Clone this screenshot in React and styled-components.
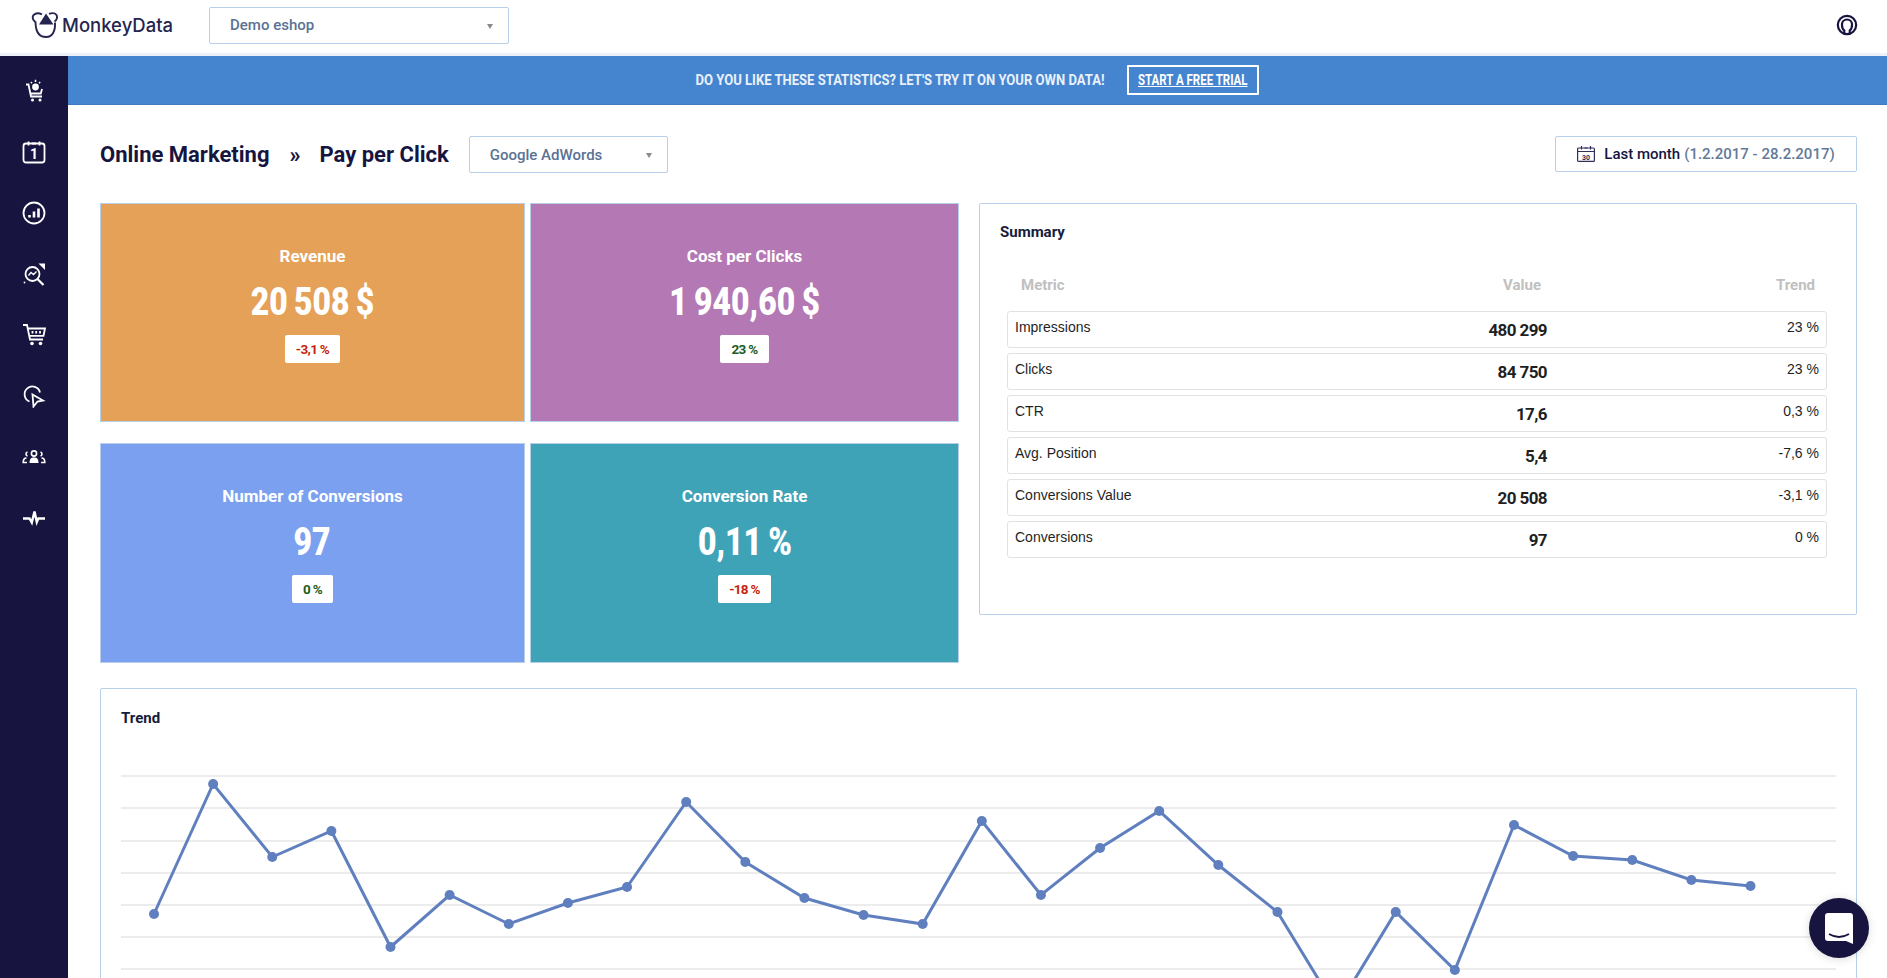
import React from 'react';
import styled, { createGlobalStyle } from 'styled-components';

const ROBOTO = '"Roboto", "Liberation Sans", sans-serif';
const NAVY = '#17153f';
const LINE = '#b7cfe9';

const cards = [
  { title: 'Revenue', value: '20 508 $', change: '-3,1 %', bg: '#e5a157', bad: true },
  { title: 'Cost per Clicks', value: '1 940,60 $', change: '23 %', bg: '#b478b4' },
  { title: 'Number of Conversions', value: '97', change: '0 %', bg: '#7ba0ef' },
  { title: 'Conversion Rate', value: '0,11 %', change: '-18 %', bg: '#3fa3b8', bad: true }
];

const rows = [
  ['Impressions', '480 299', '23 %'],
  ['Clicks', '84 750', '23 %'],
  ['CTR', '17,6', '0,3 %'],
  ['Avg. Position', '5,4', '-7,6 %'],
  ['Conversions Value', '20 508', '-3,1 %'],
  ['Conversions', '97', '0 %']
];

// y positions of the chart line, svg starts at x 121 / y 750 on the page
const trend = [
  913, 783, 856, 830, 946, 894, 923, 902, 886, 801, 861, 897, 914, 923,
  820, 894, 847, 810, 864, 911, 1008, 911, 969, 824, 855, 859, 879, 885
];
const points = trend.map((y, i) => [33 + i * 59.13, y - 750]);
const gridLines = [25, 57, 90, 122, 154, 186, 218, 250, 282];

const App = () => (
  <Page>
    <GlobalStyle />
    <Header>
      <Logo>
        <svg width="28" height="26" viewBox="0 0 28 26" fill="none" stroke="#25254f" strokeWidth="1.900">
          <path d="M4.500 10C1.800 8.500 1 5 2.500 3.200C4.500 1 8 1 11 2.300" />
          <path d="M4.500 9.500C4.500 18 7 25 15 25C21.500 25 24.500 19 24 10.500" />
          <path d="M18 1.800C21 .8 24 1 25.300 2.800C26.800 5 25.800 8 23.500 9.500" />
          <path d="M15 1.500L22.500 12.500H8Z" fill="#25254f" stroke="none" />
        </svg>
        <LogoText>MonkeyData</LogoText>
      </Logo>
      <Select $width="300px">Demo eshop</Select>
      <HelpIcon viewBox="0 0 24 24" fill="none" stroke={NAVY} strokeWidth="2.400">
        <circle cx="12" cy="12" r="10" />
        <path d="M9 21V18C7 16.500 6.500 13.500 6.500 11.500A5.500 5.500 0 0 1 17.500 11.500C17.500 13.500 17 16.500 15 18V21" />
      </HelpIcon>
    </Header>

    <Body>
      <Sidebar>
        <NavItem>
          <NavIcon viewBox="0 0 24 24">
            <path d="M4 5.500H6.500L9 17.500H20M8 14.500H18.800L20 10" />
            <circle cx="13.500" cy="8" r="2.500" fill="#fff" />
            <path d="M13.500 .8V3M8.800 3L10 4.200M18.200 3L17 4.200" strokeWidth="1.500" />
            <circle cx="10.500" cy="21" r="1.500" fill="#fff" stroke="none" />
            <circle cx="18" cy="21" r="1.500" fill="#fff" stroke="none" />
          </NavIcon>
        </NavItem>
        <NavItem>
          <NavIcon viewBox="0 0 24 24">
            <rect x="1.500" y="3.500" width="21" height="19" rx="2.500" />
            <path d="M6.500 1.500V5.500M17.500 1.500V5.500M10 3.500H14" />
            <IconText x="12" y="19" fontSize="14">1</IconText>
          </NavIcon>
        </NavItem>
        <NavItem>
          <NavIcon viewBox="0 0 24 24">
            <circle cx="12" cy="12" r="10.500" />
            <path d="M7.500 16.500V14M12 16.500V10.500M16.500 16.500V7.500" strokeWidth="2.600" />
          </NavIcon>
        </NavItem>
        <NavItem>
          <NavIcon viewBox="0 0 24 24">
            <circle cx="10.500" cy="12" r="7" />
            <path d="M15.500 17L21.500 23" strokeWidth="2.200" />
            <path d="M6.500 13.500L9 10.500L11.500 12.500L14.500 9.500" strokeWidth="1.400" />
            <path d="M16.500 1.500H23V8Z" fill="#fff" stroke="none" />
            <circle cx="2.500" cy="20.500" r=".9" fill="#fff" stroke="none" />
          </NavIcon>
        </NavItem>
        <NavItem>
          <NavIcon viewBox="0 0 24 24">
            <path d="M1 2H5L8 16.500H21" />
            <path d="M6 5.500H23L21.500 12.800H7.500" />
            <path d="M10.500 8V10.500M14.200 8V10.500M18 8V10.500" />
            <circle cx="10" cy="20.500" r="1.800" fill="#fff" stroke="none" />
            <circle cx="18.500" cy="20.500" r="1.800" fill="#fff" stroke="none" />
          </NavIcon>
        </NavItem>
        <NavItem>
          <NavIcon viewBox="0 0 24 24">
            <path d="M7.500 17.500A7.800 7.800 0 1 1 18 8.500" />
            <path d="M10.500 10.500L21 16.500L15.500 17.500L11.500 22.500Z" />
          </NavIcon>
        </NavItem>
        <NavItem>
          <NavIcon viewBox="0 0 24 24">
            <circle cx="12" cy="8.500" r="2.600" strokeWidth="1.600" />
            <path d="M7.500 18C7.500 14.500 8.500 12.500 12 12.500C15.500 12.500 16.500 14.500 16.500 18Z" fill="#fff" stroke="none" />
            <path d="M5 17.500H1.200C1.200 14.500 2 13 4.500 13M5.500 7C3.500 7.500 3.500 10.500 5.500 11" strokeWidth="1.600" />
            <path d="M19 17.500H22.800C22.800 14.500 22 13 19.500 13M18.500 7C20.500 7.500 20.500 10.500 18.500 11" strokeWidth="1.600" />
          </NavIcon>
        </NavItem>
        <NavItem>
          <NavIcon viewBox="0 0 24 24">
            <path d="M1 12.500H7.500L9.800 16.500L12.500 5.500L14.800 16L16.300 12.500H23" strokeWidth="2.400" />
          </NavIcon>
        </NavItem>
      </Sidebar>

      <Main>
        <Banner>
          <BannerText>Do you like these statistics? Let's try it on your own data!</BannerText>
          <TrialButton>
            <TrialLabel>Start a free trial</TrialLabel>
          </TrialButton>
        </Banner>

        <Content>
          <TitleRow>
            <Title>Online Marketing</Title>
            <TitleArrow>»</TitleArrow>
            <Title>Pay per Click</Title>
            <Select $width="199px">Google AdWords</Select>
            <DateButton>
              <svg width="18" height="16" viewBox="0 0 18 16" fill="none" stroke="#2f2f5a" strokeWidth="1.200">
                <rect x=".6" y="2" width="16.800" height="13.400" rx="1" />
                <path d="M.6 5.500H17.400M4.500 0V3.500M13.500 0V3.500M7.500 2H10.500" />
                <DateDigits x="9" y="13.500">30</DateDigits>
              </svg>
              <DateLabel>Last month</DateLabel>
              <DateRange>(1.2.2017 - 28.2.2017)</DateRange>
            </DateButton>
          </TitleRow>

          <TopSection>
            <CardGrid>
              {cards.map((card) => (
                <Card key={card.title} $bg={card.bg}>
                  <CardTitle>{card.title}</CardTitle>
                  <CardValue>{card.value}</CardValue>
                  <Badge $bad={card.bad}>{card.change}</Badge>
                </Card>
              ))}
            </CardGrid>

            <SummaryPanel>
              <PanelTitle>Summary</PanelTitle>
              <TableHead>
                <span>Metric</span>
                <HeadRight>Value</HeadRight>
                <HeadRight>Trend</HeadRight>
              </TableHead>
              <TableRows>
                {rows.map(([name, value, change]) => (
                  <TableRow key={name}>
                    <RowLabel>{name}</RowLabel>
                    <RowValue>{value}</RowValue>
                    <RowTrend>{change}</RowTrend>
                  </TableRow>
                ))}
              </TableRows>
            </SummaryPanel>
          </TopSection>

          <TrendPanel>
            <PanelTitle>Trend</PanelTitle>
            <Chart viewBox="0 0 1715 300">
              {gridLines.map((y) => (
                <line key={y} x1="0" x2="1715" y1={y} y2={y} stroke="#e6e6e6" strokeWidth="1.400" />
              ))}
              <polyline
                points={points.map((p) => p.join(',')).join(' ')}
                fill="none"
                stroke="#5f7fbe"
                strokeWidth="3"
              />
              {points.map(([x, y]) => (
                <circle key={x} cx={x} cy={y} r="5" fill="#5f7fbe" />
              ))}
            </Chart>
          </TrendPanel>
        </Content>
      </Main>
    </Body>

    <ChatButton>
      <svg width="28" height="31" viewBox="0 0 28 31">
        <path d="M3 0H25Q28 0 28 3V31L21 28H3Q0 28 0 25V3Q0 0 3 0Z" fill="#fff" />
        <path d="M4 21Q14 27 24 21" fill="none" stroke={NAVY} strokeWidth="1.800" />
      </svg>
    </ChatButton>
  </Page>
);

const GlobalStyle = createGlobalStyle`
  html, body {
    margin: 0;
    height: 100%;
    overflow: hidden;
    background: #fff;
  }
  * {
    box-sizing: border-box;
  }
`;

const Page = styled.div`
  display: flex;
  flex-direction: column;
  height: 100vh;
  overflow: hidden;
  font-family: ${ROBOTO};
`;

const Header = styled.header`
  display: flex;
  align-items: center;
  flex: 0 0 56px;
  padding: 0 29px 3px 31px;
  background: #fff;
  border-bottom: 3px solid #edf2f8;
`;

const Logo = styled.div`
  display: flex;
  align-items: center;
  gap: 3px;
  width: 178px;
`;

const LogoText = styled.span`
  font-family: "Inter", sans-serif;
  font-size: 18.500px;
  font-weight: 500;
  color: #25254f;
`;

const Select = styled.div`
  position: relative;
  display: flex;
  align-items: center;
  width: ${(p) => p.$width};
  height: 37px;
  padding-left: 20px;
  border: 1px solid ${LINE};
  border-radius: 2px;
  font-size: 15px;
  font-weight: 500;
  color: #5a7294;

  &::after {
    content: '';
    position: absolute;
    right: 15px;
    top: 16px;
    border-left: 3px solid transparent;
    border-right: 3px solid transparent;
    border-top: 5px solid #8a8a8a;
  }
`;

const HelpIcon = styled.svg`
  width: 22px;
  height: 22px;
  margin-left: auto;
`;

const Body = styled.div`
  display: flex;
  flex: 1;
  min-height: 0;
`;

const Sidebar = styled.nav`
  display: flex;
  flex-direction: column;
  flex: 0 0 68px;
  padding-top: 4px;
  background: ${NAVY};
`;

const NavItem = styled.div`
  display: flex;
  align-items: center;
  justify-content: center;
  flex: 0 0 61px;
`;

const NavIcon = styled.svg`
  width: 24px;
  height: 24px;
  fill: none;
  stroke: #fff;
  stroke-width: 1.800;
`;

const IconText = styled.text`
  font-family: ${ROBOTO};
  font-weight: 700;
  fill: #fff;
  stroke: none;
  text-anchor: middle;
`;

const Main = styled.main`
  flex: 1;
  min-width: 0;
`;

const Banner = styled.div`
  display: flex;
  align-items: center;
  justify-content: center;
  gap: 23px;
  height: 49px;
  background: #4585cf;
  border-bottom: 1px solid #3f79bd;
`;

const BannerText = styled.span`
  margin: 0 -31px;
  font-size: 15px;
  font-weight: 700;
  color: #e9f0fa;
  text-transform: uppercase;
  white-space: nowrap;
  transform: scaleX(0.87);
`;

const TrialButton = styled.a`
  display: flex;
  align-items: center;
  justify-content: center;
  width: 132px;
  height: 30px;
  border: 2px solid #fff;
  border-radius: 1px;
`;

const TrialLabel = styled.span`
  flex: none;
  font-size: 14px;
  font-weight: 700;
  color: #fff;
  text-decoration: underline;
  text-transform: uppercase;
  white-space: nowrap;
  transform: scaleX(0.82);
`;

const Content = styled.div`
  padding: 31px 30px 0 32px;
`;

const TitleRow = styled.div`
  display: flex;
  align-items: center;
  margin-bottom: 30px;
`;

const Title = styled.h1`
  margin: 0 20px 0 0;
  font-size: 22px;
  font-weight: 700;
  color: ${NAVY};
`;

const TitleArrow = styled(Title)`
  margin-right: 19px;
`;

const DateButton = styled.div`
  display: flex;
  align-items: center;
  justify-content: center;
  gap: 9px;
  width: 302px;
  height: 36px;
  margin: -2px 0 0 auto;
  border: 1px solid ${LINE};
  border-radius: 2px;
  font-size: 15px;
  font-weight: 500;
`;

const DateDigits = styled.text`
  font-family: ${ROBOTO};
  font-size: 7px;
  font-weight: 700;
  fill: #2f2f5a;
  stroke: none;
  text-anchor: middle;
`;

const DateLabel = styled.span`
  color: ${NAVY};
  margin-right: -5px;
`;

const DateRange = styled.span`
  color: #637a99;
`;

const TopSection = styled.div`
  display: flex;
  align-items: flex-start;
  gap: 20px;
  margin-bottom: 25px;
`;

const CardGrid = styled.div`
  display: grid;
  flex: 0 0 859px;
  grid-template-columns: 425px 429px;
  grid-template-rows: 219px 220px;
  gap: 21px 5px;
`;

const Card = styled.div`
  display: flex;
  flex-direction: column;
  align-items: center;
  padding-top: 41px;
  background: ${(p) => p.$bg};
  border: 1px solid ${LINE};
  color: #fff;
`;

const CardTitle = styled.div`
  font-size: 17px;
  font-weight: 700;
  line-height: 22px;
`;

const CardValue = styled.div`
  margin-top: 12px;
  font-size: 38px;
  font-weight: 900;
  line-height: 46px;
  white-space: nowrap;
  word-spacing: -2px;
  transform: scaleX(0.84);
`;

const Badge = styled.div`
  display: flex;
  align-items: center;
  height: 28px;
  margin-top: 10px;
  padding: 0 11px;
  background: #fff;
  border-radius: 2px;
  font-size: 13.500px;
  font-weight: 700;
  letter-spacing: -0.7px;
  color: ${(p) => (p.$bad ? '#c81f0c' : '#1d5c1d')};
`;

const SummaryPanel = styled.section`
  flex: 1;
  height: 412px;
  padding: 19px 29px 0 20px;
  border: 1px solid ${LINE};
  border-radius: 2px;
`;

const PanelTitle = styled.h2`
  margin: 0;
  font-size: 15px;
  font-weight: 700;
  line-height: 18px;
  color: #14203a;
`;

const TableHead = styled.div`
  display: grid;
  grid-template-columns: 300px 220px 1fr;
  height: 20px;
  margin: 34px 0 0 7px;
  padding: 0 12px 0 14px;
  font-size: 15px;
  font-weight: 700;
  line-height: 20px;
  color: #c0c0c0;
`;

const HeadRight = styled.span`
  text-align: right;
`;

const TableRows = styled.div`
  display: flex;
  flex-direction: column;
  gap: 5px;
  margin: 16px 0 0 7px;
`;

const TableRow = styled.div`
  display: grid;
  grid-template-columns: 300px 232px 1fr;
  height: 37px;
  padding: 0 7px;
  border: 1px solid #e2e2e2;
  border-radius: 3px;
  color: #1f1f1f;
`;

const RowLabel = styled.span`
  margin-top: 5px;
  font-family: "Liberation Sans", sans-serif;
  font-size: 14px;
  line-height: 20px;
`;

const RowValue = styled.span`
  margin-top: 6px;
  font-size: 17px;
  font-weight: 700;
  line-height: 24px;
  letter-spacing: -0.6px;
  text-align: right;
`;

const RowTrend = styled(RowLabel)`
  text-align: right;
`;

const TrendPanel = styled.section`
  height: 400px;
  padding: 20px 20px 0;
  border: 1px solid ${LINE};
  border-radius: 2px;
`;

const Chart = styled.svg`
  display: block;
  width: 1715px;
  height: 300px;
  margin-top: 24px;
`;

const ChatButton = styled.div`
  position: fixed;
  right: 18px;
  bottom: 20px;
  display: flex;
  align-items: center;
  justify-content: center;
  width: 60px;
  height: 60px;
  background: ${NAVY};
  border-radius: 50%;
  box-shadow: 0 1px 8px rgba(0, 0, 0, 0.15);
`;

export default App;
